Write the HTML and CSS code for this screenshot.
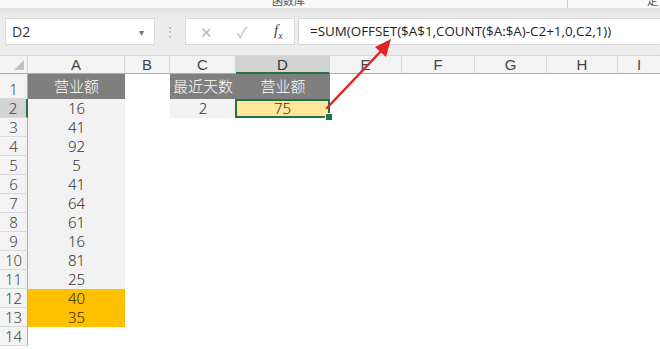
FILE: index.html
```html
<!DOCTYPE html>
<html lang="zh-CN">
<head>
    <meta charset="UTF-8">
    <title>最近天数营业额</title>
    <link rel="stylesheet" href="styles.css">
</head>
<body>
    <div class="ribbon-edge">
        <span class="cut-text">函数库</span>
        <span class="edge-line"></span>
        <span class="cut-text right">定</span>
    </div>

    <!-- 编辑栏 -->
    <div class="formula-bar">
        <div class="name-box">
            <span>D2</span>
            <span class="caret">&#9662;</span>
        </div>
        <div class="grip">&#8942;</div>
        <div class="buttons">
            <span class="btn">&#10005;</span>
            <span class="btn">&#10003;</span>
            <span class="fx"><i>f</i><sub>x</sub></span>
        </div>
        <div class="formula">=SUM(OFFSET($A$1,COUNT($A:$A)-C2+1,0,C2,1))</div>
    </div>

    <div class="sheet top">
        <div class="corner"></div>
        <div class="col-head">A</div>
        <div class="col-head">B</div>
        <div class="col-head">C</div>
        <div class="col-head active">D</div>
        <div class="col-head">E</div>
        <div class="col-head">F</div>
        <div class="col-head">G</div>
        <div class="col-head">H</div>
        <div class="col-head last">I</div>

        <div class="row-head tall">1</div>
        <div class="cell head">营业额</div>
        <div class="cell"></div>
        <div class="cell head">最近天数</div>
        <div class="cell head">营业额</div>
        <div class="cell"></div><div class="cell"></div><div class="cell"></div><div class="cell"></div><div class="cell"></div>

        <div class="row-head active">2</div>
        <div class="cell soft">16</div>
        <div class="cell"></div>
        <div class="cell soft">2</div>
        <div class="cell result">75<span class="handle"></span></div>
        <div class="cell"></div><div class="cell"></div><div class="cell"></div><div class="cell"></div><div class="cell"></div>
    </div>

    <div class="sheet" id="rows"></div>

    <svg class="arrow" width="660" height="349" viewBox="0 0 660 349">
        <line x1="327" y1="108" x2="383" y2="49" stroke="#e02424" stroke-width="2.5" stroke-linecap="round"/>
        <polygon points="391,39 375,47 386,57" fill="#e02424"/>
    </svg>

    <script>
        // lignes 3 à 14
        const values = [41, 92, 5, 41, 64, 61, 16, 81, 25, 40, 35];
        const rows = document.getElementById('rows');
        let html = '';
        for (let i = 0; i < 12; i++) {
            const v = values[i];
            let cls = 'cell';
            if (v !== undefined) cls += i >= 9 ? ' hot' : ' soft';
            html += `<div class="row-head">${i + 3}</div><div class="${cls}">${v !== undefined ? v : ''}</div>`;
            for (let j = 0; j < 8; j++) html += '<div class="cell"></div>';
        }
        rows.innerHTML = html;
    </script>
</body>
</html>
```

FILE: styles.css
```css
body {
    margin: 0;
    width: 660px;
    height: 349px;
    overflow: hidden;
    position: relative;
    background: #fff;
    font-family: "Noto Sans CJK SC", "Noto Sans", sans-serif;
    color: #333;
}
.ribbon-edge {
    height: 8px;
    background: #f9f9f9;
    border-bottom: 1px solid #e0e0e0;
    display: flex;
    align-items: flex-end;
    overflow: hidden;
    position: relative;
}
.cut-text {
    font-size: 11px;
    line-height: 11px;
    color: #555;
    margin-left: 272px;
    margin-bottom: 2px;
}
.cut-text.right {
    margin-left: auto;
    margin-right: 2px;
}
.edge-line {
    width: 1px;
    height: 8px;
    background: #d0d0d0;
    margin-left: 262px;
}
.formula-bar {
    height: 47px;
    background: linear-gradient(#e4e4e4, #ececec 10px, #ededed);
    display: flex;
    align-items: flex-start;
    padding-top: 9px;
    box-sizing: border-box;
    border-bottom: 1px solid #d6d6d6;
}
.name-box {
    margin-left: 5px;
    width: 150px;
    height: 27px;
    background: #fff;
    border: 1px solid #d8d8d8;
    box-sizing: border-box;
    display: flex;
    align-items: center;
    justify-content: space-between;
    padding: 0 10px 0 6px;
    font-family: "Open Sans", sans-serif;
    font-size: 14px;
    color: #333;
}
.caret {
    font-size: 10px;
    color: #777;
}
.grip {
    width: 30px;
    text-align: center;
    color: #b4b4b4;
    font-size: 14px;
    line-height: 27px;
}
.buttons {
    width: 110px;
    height: 27px;
    background: #fff;
    border: 1px solid #d8d8d8;
    box-sizing: border-box;
    display: flex;
    align-items: center;
    padding-left: 14px;
}
.btn {
    color: #b8b8b8;
    font-size: 15px;
    width: 37px;
}
.fx {
    font-family: "Liberation Serif", serif;
    font-size: 15px;
    color: #444;
}
.fx sub {
    font-size: 10px;
    font-style: italic;
}
.formula {
    margin-left: 3px;
    flex: 1;
    height: 27px;
    background: #fff;
    border: 1px solid #d8d8d8;
    border-right: none;
    box-sizing: border-box;
    padding-left: 11px;
    font-family: "Open Sans", sans-serif;
    font-size: 13.4px;
    line-height: 25px;
    color: #222;
    white-space: nowrap;
}
.sheet {
    display: grid;
    grid-template-columns: 28px 97px 45px 66px 94px 72px 73px 72px 71px 42px;
    grid-auto-rows: 19px;
    font-size: 15px;
    font-weight: 300;
}
.sheet.top {
    grid-template-rows: 18px 25px 19px;
}
.corner {
    background: #f3f3f3;
    border-right: 1px solid #d4d4d4;
    border-bottom: 1px solid #ababab;
    position: relative;
}
.corner::after {
    content: "";
    position: absolute;
    right: 3px;
    bottom: 3px;
    border-style: solid;
    border-width: 0 0 10px 10px;
    border-color: transparent transparent #c0c0c0 transparent;
}
.col-head {
    background: #f3f3f3;
    border-right: 1px solid #d4d4d4;
    border-bottom: 1px solid #ababab;
    font-family: "Liberation Sans", sans-serif;
    font-weight: normal;
    font-size: 15px;
    line-height: 18px;
    text-align: center;
    color: #444;
}
.col-head.active {
    background: #d3d3d3;
    border-bottom: 2px solid #217346;
    color: #333;
}
.col-head.last {
    border-right: none;
}
.row-head {
    background: #f3f3f3;
    border-right: 1px solid #ababab;
    border-bottom: 1px solid #dadada;
    font-family: "Noto Sans", sans-serif;
    font-weight: 300;
    font-size: 15px;
    line-height: 19px;
    text-align: center;
    color: #444;
    box-sizing: border-box;
}
.row-head.tall {
    line-height: 30px;
    overflow: hidden;
}
.row-head.active {
    background: #d3d3d3;
    border-right: 2px solid #217346;
}
.cell {
    text-align: center;
    line-height: 19px;
    color: #333;
    font-family: "Noto Sans", "Noto Sans CJK SC", sans-serif;
    position: relative;
}
.cell.head {
    background: #7f7f7f;
    color: #fff;
    font-family: "Noto Sans CJK SC", sans-serif;
    font-size: 15px;
    line-height: 24px;
}
.cell.soft {
    background: #f2f2f2;
}
.cell.hot {
    background: #ffc000;
    color: #3a2a00;
}
.cell.result {
    background: #ffe699;
    border: 2px solid #217346;
    line-height: 15px;
    margin-left: -1px;
}
.handle {
    position: absolute;
    right: -5px;
    bottom: -5px;
    width: 6px;
    height: 6px;
    background: #217346;
    border: 1px solid #fff;
}
.arrow {
    position: absolute;
    left: 0;
    top: 0;
    pointer-events: none;
}
```
